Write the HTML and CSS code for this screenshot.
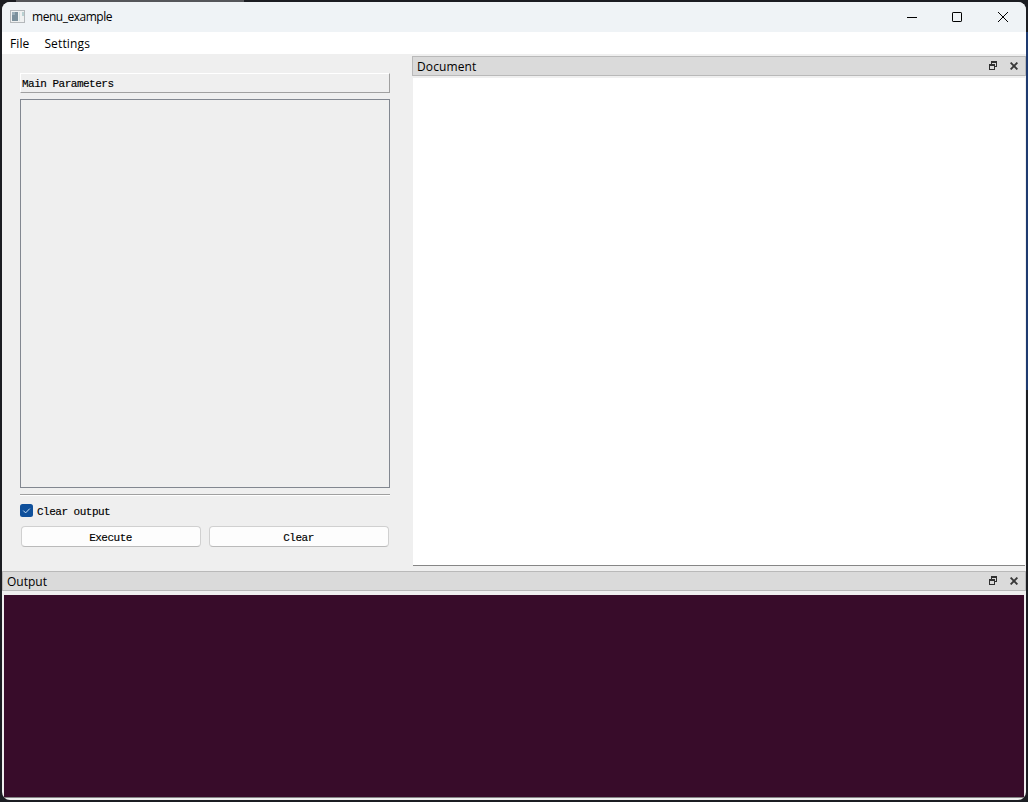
FILE: index.html
```
<!DOCTYPE html>
<html lang="en">
<head>
<meta charset="utf-8">
<title>menu_example</title>
<link rel="stylesheet" href="styles.css">
</head>
<body>
<svg width="0" height="0" class="defs">
  <symbol id="float" viewBox="0 0 8 9" shape-rendering="crispEdges">
    <path fill="#303030" d="M2 0h6v6H6V5h1V2H3v1H2zM0 3h6v6H0zM1 5v3h4V5z" fill-rule="evenodd"/>
  </symbol>
  <symbol id="close" viewBox="0 0 8 8">
    <path d="M.6 .6l6.8 6.8M7.4 .6L.6 7.4" stroke="#383838" stroke-width="1.9"/>
  </symbol>
</svg>
<div class="window">
  <header class="titlebar">
    <svg class="app-icon" width="15" height="13" viewBox="0 0 15 13" shape-rendering="crispEdges">
      <path fill="#b4b8bb" d="M0 0h15v13H0z"/><path fill="#eff1f1" d="M1 1h13v11H1z"/>
      <path fill="#7b909c" d="M2 2h6v9H2z"/><path fill="#9baeb8" d="M2 2h3v3H2z"/><path fill="#d6e3e3" d="M9 2h1v9H9z"/><path fill="#b9d1d2" d="M12 2h2v4h-2z"/>
    </svg>
    <span class="title">menu_example</span>
    <svg class="controls" width="102" height="12" viewBox="0 0 102 12" fill="none" stroke="#000">
      <path d="M0 6.5h10"/><rect x="45.5" y="1.5" width="9" height="9" rx=".6"/><path d="M91 1l10 10M101 1L91 11"/>
    </svg>
  </header>
  <nav class="menubar"><span class="file">File</span><span class="settings">Settings</span></nav>
  <main class="workspace">
    <section class="params">
      <div class="heading">Main Parameters</div>
      <div class="list"></div>
      <div class="rule"></div>
      <label class="option">
        <svg width="13" height="13" viewBox="0 0 13 13"><rect width="13" height="13" rx="2.5" fill="#0f509b"/><path d="M3.3 6.6l2.3 2.3 4.2-4.3" fill="none" stroke="#c8e0f6"/></svg>
        <span>Clear output</span>
      </label>
      <div class="buttons"><button>Execute</button><button>Clear</button></div>
    </section>
    <section class="document">
      <div class="dock"><span class="document-label">Document</span><svg class="float" width="8" height="9"><use href="#float"/></svg><svg width="8" height="8"><use href="#close"/></svg></div>
      <div class="page"></div>
    </section>
  </main>
  <section class="output">
    <div class="dock"><span class="output-label">Output</span><svg class="float" width="8" height="9"><use href="#float"/></svg><svg width="8" height="8"><use href="#close"/></svg></div>
    <div class="terminal"></div>
  </section>
</div>
</body>
</html>
```
FILE: styles.css
```
* { box-sizing: border-box; }
body {
  margin: 0;
  width: 1028px;
  height: 802px;
  padding: 2px;
  overflow: hidden;
  background: linear-gradient(90deg, transparent 16px, #55565a 16px, #55565a 244px, transparent 244px) 0 0 / 100% 2px no-repeat,
    linear-gradient(#1e3a70, #1e3a70) 1026px 32px / 2px 358px no-repeat, #1b1d22;
  font-family: "Open Sans", "Noto Sans", sans-serif;
  font-size: 12px;
  color: #000;
}
.defs { position: absolute; }
.window {
  width: 1024px;
  height: 798px;
  background: #efefef;
  border-radius: 8px;
  overflow: hidden;
  display: flex;
  flex-direction: column;
}
.titlebar {
  height: 30px;
  flex: none;
  background: #eff3f6;
  display: flex;
  align-items: center;
  padding: 0 17px 1px 8px;
}
.app-icon { margin-bottom: 1px; }
.title { margin-left: 7px; letter-spacing: -.48px; }
.controls { margin-left: auto; }
.menubar {
  height: 22px;
  flex: none;
  background: #fff;
  display: flex;
  align-items: center;
  padding: 1px 0 0 8px;
  gap: 15px;
}
.file { letter-spacing: .1px; }
.settings { letter-spacing: .15px; }
.workspace { display: flex; height: 517px; flex: none; }
.params { width: 410px; padding: 19px 22px 0 18px; }
.heading {
  height: 20px;
  border: 1px solid #a0a0a0;
  border-top-color: #fff;
  border-left-color: #fff;
  padding-left: 1px;
  line-height: 20px;
}
.heading, .option, button {
  font-family: "Liberation Mono", monospace;
  font-size: 11px;
  letter-spacing: -.5px;
  -webkit-text-stroke: .15px #000;
}
.list { height: 389px; margin-top: 6px; border: 1px solid #828790; }
.rule { height: 2px; margin-top: 6px; border-top: 1px solid #a0a0a0; border-bottom: 1px solid #fff; }
.option { display: flex; align-items: center; gap: 4px; height: 13px; margin-top: 8px; }
.option span { padding-top: 3px; }
.buttons { display: flex; gap: 8px; padding: 9px 1px 0; }
button {
  flex: 1;
  height: 21px;
  padding: 2px 1px 0 0;
  background: #fdfdfd;
  border: 1px solid #d0d0d0;
  border-bottom-color: #bababa;
  border-radius: 4px;
  color: #000;
}
.document { flex: 1; padding-top: 2px; }
.dock {
  height: 20px;
  border: 1px solid #b9b9b9;
  background: #dadada;
  display: flex;
  align-items: center;
  padding: 0 7px 0 4px;
}
.dock span { flex: 1; line-height: 18px; padding-top: 2px; }
.float { margin: 0 13px 1px 0; }
.document-label { letter-spacing: .1px; }
.page {
  height: 488px;
  margin: 2px 1px 0;
  background: #fff;
  border-bottom: 1px solid #868686;
}
.output { flex: 1; }
.output .terminal {
  height: 203px;
  margin: 4px 2px 0;
  background: #380c2a;
  border-bottom: 1px solid #868686;
}
```
